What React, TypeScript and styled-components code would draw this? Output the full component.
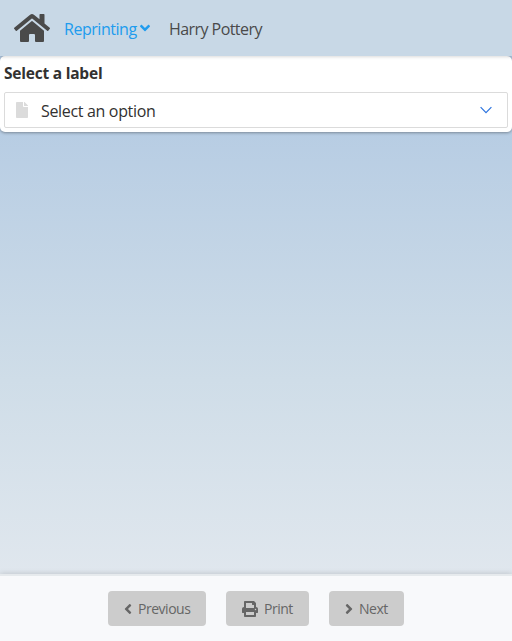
import React from "react";
import styled, { createGlobalStyle } from "styled-components";
import { FaAngleDown, FaAngleLeft, FaAngleRight, FaFile, FaHome, FaPrint } from "react-icons/fa";

const GlobalStyle = createGlobalStyle`
  * { box-sizing: border-box; }
  body { margin: 0; }
`;

const Page = styled.div`
  display: flex;
  flex-direction: column;
  height: 100vh;
  overflow: hidden;
  font-family: "Segoe UI", "Open Sans", "Noto Sans", sans-serif;
  color: #323130;
  background: linear-gradient(#b0c8e2 56px, #cfdde8 380px, #e0e7ee 574px);
`;

const TopBar = styled.header`
  position: relative;
  z-index: 1;
  display: flex;
  align-items: center;
  flex: 0 0 56px;
  padding-left: 14px;
  background: #c8d8e6;
  box-shadow: 0 1px 3px rgba(10, 10, 10, 0.15);
  white-space: nowrap;
`;

const HomeIcon = styled(FaHome)`
  width: 36px;
  height: 32px;
  color: #4a4a4a;
`;

const BarText = styled.span<{ $width: number; $gap: number; $active?: boolean; $spacing: number }>`
  width: ${(p) => p.$width}px;
  margin-left: ${(p) => p.$gap}px;
  padding-top: 2px;
  font-size: 16px;
  line-height: 24px;
  letter-spacing: ${(p) => p.$spacing}px;
  color: ${(p) => (p.$active ? "#209cee" : "#4a4a4a")};
`;

const MenuArrow = styled(FaAngleDown)`
  width: 10px;
  height: 16px;
  margin-left: 3px;
  color: #209cee;
`;

const Card = styled.section`
  flex: 0 0 76px;
  padding: 4px;
  background: #fff;
  border-radius: 5px;
  box-shadow: 0 1px 3px rgba(10, 10, 10, 0.35);
`;

const Label = styled.div`
  height: 32px;
  font-size: 15.5px;
  font-weight: 700;
  line-height: 26px;
  letter-spacing: -0.22px;
`;

const Select = styled.div`
  display: flex;
  align-items: center;
  height: 36px;
  padding: 0 15px 0 11px;
  border: 1px solid #dbdbdb;
  border-radius: 2px;
  font-size: 16px;
  letter-spacing: -0.33px;
`;

const FileIcon = styled(FaFile)`
  width: 12px;
  height: 16px;
  color: #dbdbdb;
`;

const SelectText = styled.span`
  flex: 1;
  margin-left: 13px;
  padding-top: 2px;
`;

const Content = styled.main`
  flex: 1;
`;

const Footer = styled.footer`
  display: flex;
  flex: 0 0 67px;
  justify-content: center;
  gap: 20px;
  padding-top: 15px;
  border-top: 2px solid #e6eaed;
  background: #f8f9fb;
  box-shadow: 0 -1px 5px rgba(10, 10, 10, 0.13);
`;

const Button = styled.button<{ $width: number }>`
  display: flex;
  align-items: center;
  width: ${(p) => p.$width}px;
  height: 35px;
  padding: 0 0 0 16px;
  border: 0;
  border-radius: 4px;
  background: #ccc;
  color: #666;
  font: 14px/20px "Segoe UI", "Open Sans", "Noto Sans", sans-serif;
  letter-spacing: -0.48px;
  white-space: nowrap;
`;

const ButtonIcon = styled.span<{ $width: number }>`
  display: flex;
  justify-content: center;
  width: ${(p) => p.$width}px;
  margin-right: 6px;
  font-size: 16px;
`;

export default function App() {
  return (
    <Page>
      <GlobalStyle />
      <TopBar>
        <HomeIcon />
        <BarText $width={73} $gap={14} $spacing={-0.46} $active>Reprinting</BarText>
        <MenuArrow />
        <BarText $width={94} $gap={19} $spacing={-0.56}>Harry Pottery</BarText>
      </TopBar>
      <Card>
        <Label>Select a label</Label>
        <Select>
          <FileIcon />
          <SelectText>Select an option</SelectText>
          <svg width="12" height="8" viewBox="0 0 12 8" fill="none" stroke="#2b73df" strokeWidth="1.2">
            <path d="M.6 1.2 6 6.6l5.4-5.4" />
          </svg>
        </Select>
      </Card>
      <Content />
      <Footer>
        <Button $width={98}>
          <ButtonIcon $width={8}><FaAngleLeft /></ButtonIcon>
          Previous
        </Button>
        <Button $width={83}>
          <ButtonIcon $width={16}><FaPrint /></ButtonIcon>
          Print
        </Button>
        <Button $width={75}>
          <ButtonIcon $width={8}><FaAngleRight /></ButtonIcon>
          Next
        </Button>
      </Footer>
    </Page>
  );
}
